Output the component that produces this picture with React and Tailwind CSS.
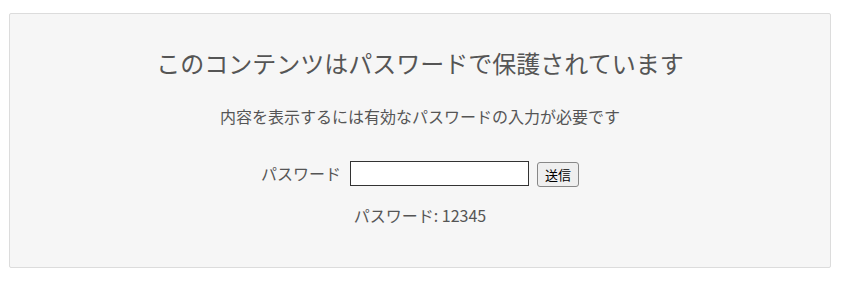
export default function App() {
  const font = { fontFamily: '"Noto Sans CJK JP", "Noto Sans", sans-serif' };
  return (
    <div className="w-[847px] h-[291px] bg-white pt-[13px] pl-[9px]" style={font}>
      <div className="w-[822px] h-[255px] bg-[#f6f6f6] border border-[#dcdcdc] rounded-[2px] flex flex-col items-center pt-[31px]">
        <div className="h-[36px] leading-[36px] text-[24px] text-[#555]">このコンテンツはパスワードで保護されています</div>
        <div className="mt-[23px] h-[24px] leading-[24px] text-[16px] text-[#555]">内容を表示するには有効なパスワードの入力が必要です</div>
        <div className="mt-[32px] flex items-center h-[27px]">
          <span className="text-[16px] text-[#555] mr-[9px] leading-[24px] -mt-[2px]">パスワード</span>
          <input type="password" className="w-[179px] h-[25px] bg-white border border-[#333] outline-none" />
          <button className="ml-[8px] h-[25px] px-[7px] text-[13px] text-black bg-[#efefef] border border-[#888] rounded-[3px] leading-none mt-[1px]">送信</button>
        </div>
        <div className="mt-[16px] h-[24px] leading-[24px] text-[16px] text-[#555]">パスワード: 12345</div>
      </div>
    </div>
  );
}
